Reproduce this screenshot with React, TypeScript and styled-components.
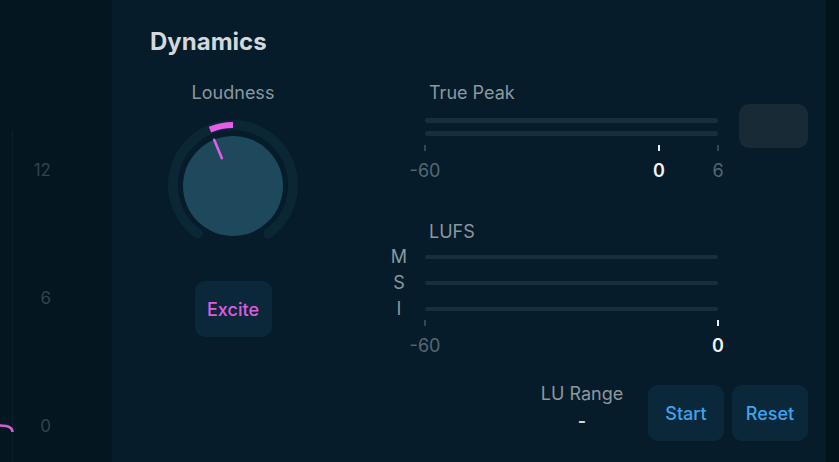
import React from "react";
import styled, { createGlobalStyle } from "styled-components";

const GlobalStyle = createGlobalStyle`
  html, body { margin: 0; padding: 0; background: #061c2a; }
  body { font-family: Inter, "Noto Sans", sans-serif; -webkit-font-smoothing: antialiased; }
  * { box-sizing: border-box; }
`;

const Shell = styled.div`
  display: flex;
  width: 839px;
  height: 462px;
  overflow: hidden;
`;

/* ---------- left graph panel ---------- */
const SidePanel = styled.aside`
  width: 112px;
  flex: none;
  display: flex;
  background: #04161f;
`;

const GraphSvg = styled.svg`
  width: 24px;
  height: 462px;
  flex: none;
`;

const AxisLabels = styled.div`
  width: 27px;
  display: flex;
  flex-direction: column;
  align-items: flex-end;
  gap: 108px;
  padding-top: 160px;
`;

const AxisLabel = styled.span`
  font-size: 17px;
  line-height: 20px;
  color: #33434d;
`;

/* ---------- main panel ---------- */
const Main = styled.main`
  flex: 1;
  display: flex;
  flex-direction: column;
  padding: 27px 0 0 38px;
  background: #061c2a;
`;

const RightEdge = styled.div`
  width: 13px;
  flex: none;
  background: #03131b;
`;

const Title = styled.h1`
  margin: 0;
  font-size: 24px;
  line-height: 30px;
  font-weight: 700;
  color: #d2d8dc;
`;

const Body = styled.div`
  display: flex;
  padding-left: 13px;
`;

const KnobColumn = styled.div`
  width: 140px;
  display: flex;
  flex-direction: column;
  align-items: center;
`;

const Caption = styled.div<{ $top?: number; $indent?: number }>`
  margin-top: ${(p) => p.$top ?? 0}px;
  padding-left: ${(p) => p.$indent ?? 0}px;
  font-size: 18px;
  line-height: 20px;
  color: #8b989f;
`;

const KnobSvg = styled.svg`
  margin-top: 12px;
  width: 140px;
  height: 140px;
  display: block;
`;

const PadButton = styled.button<{ $tone: "pink" | "blue"; $width: number; $top?: number }>`
  margin-top: ${(p) => p.$top ?? 0}px;
  width: ${(p) => p.$width}px;
  height: 56px;
  border: none;
  border-radius: 10px;
  background: #0a283a;
  font-family: inherit;
  font-size: 18px;
  font-weight: 500;
  color: ${(p) => (p.$tone === "pink" ? "#de5cdf" : "#3ea3ee")};
  padding: 0;
  cursor: pointer;
`;

const MeterColumn = styled.div`
  margin-left: 85px;
  width: 420px;
  display: flex;
  flex-direction: column;
`;

const MeterRow = styled.div`
  display: flex;
  align-items: flex-start;
  padding-left: 37px;
`;

const TrackStack = styled.div`
  width: 293px;
  display: flex;
  flex-direction: column;
`;

const Bars = styled.div`
  margin-top: 15px;
  display: flex;
  flex-direction: column;
  gap: 8px;
`;

const Bar = styled.div<{ $h: number }>`
  width: 293px;
  height: ${(p) => p.$h}px;
  border-radius: 2px;
  background: #172f3c;
`;

const PeakBox = styled.div`
  margin-left: 21px;
  margin-top: 1px;
  width: 69px;
  height: 44px;
  border-radius: 10px;
  background: #172a36;
`;

const ScaleBox = styled.div<{ $top: number; $indent?: number }>`
  position: relative;
  margin-top: ${(p) => p.$top}px;
  margin-left: ${(p) => p.$indent ?? 0}px;
  width: 293px;
  height: 36px;
`;

const Tick = styled.span<{ $bright?: boolean }>`
  position: absolute;
  top: 0;
  width: 2px;
  height: 6px;
  margin-left: -1px;
  background: ${(p) => (p.$bright ? "#e8edf0" : "#34474f")};
`;

const TickLabel = styled.span<{ $bright?: boolean }>`
  position: absolute;
  top: 16px;
  transform: translateX(-50%);
  font-size: 18px;
  line-height: 20px;
  font-weight: ${(p) => (p.$bright ? 600 : 400)};
  color: ${(p) => (p.$bright ? "#f1f4f6" : "#566872")};
  white-space: nowrap;
`;

const ChannelList = styled.div`
  margin-top: 2px;
  display: flex;
  flex-direction: column;
`;

const ChannelRow = styled.div`
  height: 26px;
  display: flex;
  align-items: center;
`;

const ChannelName = styled.span`
  width: 22px;
  margin-right: 15px;
  text-align: center;
  font-size: 18px;
  line-height: 20px;
  color: #8b989f;
`;

const Footer = styled.div`
  margin-top: 28px;
  display: flex;
  justify-content: flex-end;
  align-items: flex-start;
  gap: 8px;
`;

const RangeBlock = styled.div`
  width: 90px;
  margin-right: 13px;
  display: flex;
  flex-direction: column;
  align-items: center;
`;

const RangeValue = styled.span`
  margin-top: 7px;
  font-size: 18px;
  line-height: 20px;
  font-weight: 600;
  color: #d4dadf;
`;

type Mark = { pos: number; label: string; bright?: boolean };

const Scale: React.FC<{ marks: Mark[]; top: number; indent?: number }> = ({ marks, top, indent }) => (
  <ScaleBox $top={top} $indent={indent}>
    {marks.map((m) => (
      <React.Fragment key={m.label}>
        <Tick $bright={m.bright} style={{ left: m.pos }} />
        <TickLabel $bright={m.bright} style={{ left: m.pos }}>
          {m.label}
        </TickLabel>
      </React.Fragment>
    ))}
  </ScaleBox>
);

const polar = (r: number, deg: number) => {
  const a = (deg * Math.PI) / 180;
  return [70 + r * Math.cos(a), 70 + r * Math.sin(a)];
};

const Knob: React.FC<{ valueDeg: number }> = ({ valueDeg }) => {
  const [sx, sy] = polar(60, 126);
  const [ex, ey] = polar(60, 54);
  const [vx, vy] = polar(60, valueDeg);
  const [cx, cy] = polar(60, 270);
  const [p1x, p1y] = polar(29, valueDeg);
  const [p2x, p2y] = polar(49, valueDeg);
  return (
    <KnobSvg viewBox="0 0 140 140">
      <path
        d={`M ${sx} ${sy} A 60 60 0 1 1 ${ex} ${ey}`}
        fill="none"
        stroke="#0b2634"
        strokeWidth={10}
        strokeLinecap="round"
      />
      <path d={`M ${vx} ${vy} A 60 60 0 0 1 ${cx} ${cy}`} fill="none" stroke="#e55ee8" strokeWidth={6} />
      <circle cx={70} cy={71} r={50} fill="#1e485b" />
      <line x1={p1x} y1={p1y} x2={p2x} y2={p2y} stroke="#e55ee8" strokeWidth={2.5} strokeLinecap="round" />
    </KnobSvg>
  );
};

export default function App() {
  return (
    <>
      <GlobalStyle />
      <Shell>
        <SidePanel>
          <GraphSvg viewBox="0 0 24 462">
            <line x1={12.5} y1={130} x2={12.5} y2={462} stroke="#0b1f2a" strokeWidth={1.5} />
            <path d="M 0 425.5 Q 12.5 425.5 12.5 432" fill="none" stroke="#d35fdb" strokeWidth={2.5} />
          </GraphSvg>
          <AxisLabels>
            <AxisLabel>12</AxisLabel>
            <AxisLabel>6</AxisLabel>
            <AxisLabel>0</AxisLabel>
          </AxisLabels>
        </SidePanel>
        <Main>
          <Title>Dynamics</Title>
          <Body>
            <KnobColumn>
              <Caption $top={26}>Loudness</Caption>
              <Knob valueDeg={247.4} />
              <PadButton $tone="pink" $width={77} $top={26}>
                Excite
              </PadButton>
            </KnobColumn>
            <MeterColumn>
              <Caption $top={26} $indent={41}>
                True Peak
              </Caption>
              <MeterRow>
                <TrackStack>
                  <Bars>
                    <Bar $h={5} />
                    <Bar $h={5} />
                  </Bars>
                  <Scale
                    top={9}
                    marks={[
                      { pos: 0, label: "-60" },
                      { pos: 234, label: "0", bright: true },
                      { pos: 293, label: "6" },
                    ]}
                  />
                </TrackStack>
                <PeakBox />
              </MeterRow>
              <Caption $top={41} $indent={41}>
                LUFS
              </Caption>
              <ChannelList>
                {["M", "S", "I"].map((c) => (
                  <ChannelRow key={c}>
                    <ChannelName>{c}</ChannelName>
                    <Bar $h={4} />
                  </ChannelRow>
                ))}
              </ChannelList>
              <Scale
                top={-2}
                indent={37}
                marks={[
                  { pos: 0, label: "-60" },
                  { pos: 293, label: "0", bright: true },
                ]}
              />
              <Footer>
                <RangeBlock>
                  <Caption>LU Range</Caption>
                  <RangeValue>-</RangeValue>
                </RangeBlock>
                <PadButton $tone="blue" $width={76} $top={1}>
                  Start
                </PadButton>
                <PadButton $tone="blue" $width={76} $top={1}>
                  Reset
                </PadButton>
              </Footer>
            </MeterColumn>
          </Body>
        </Main>
        <RightEdge />
      </Shell>
    </>
  );
}
